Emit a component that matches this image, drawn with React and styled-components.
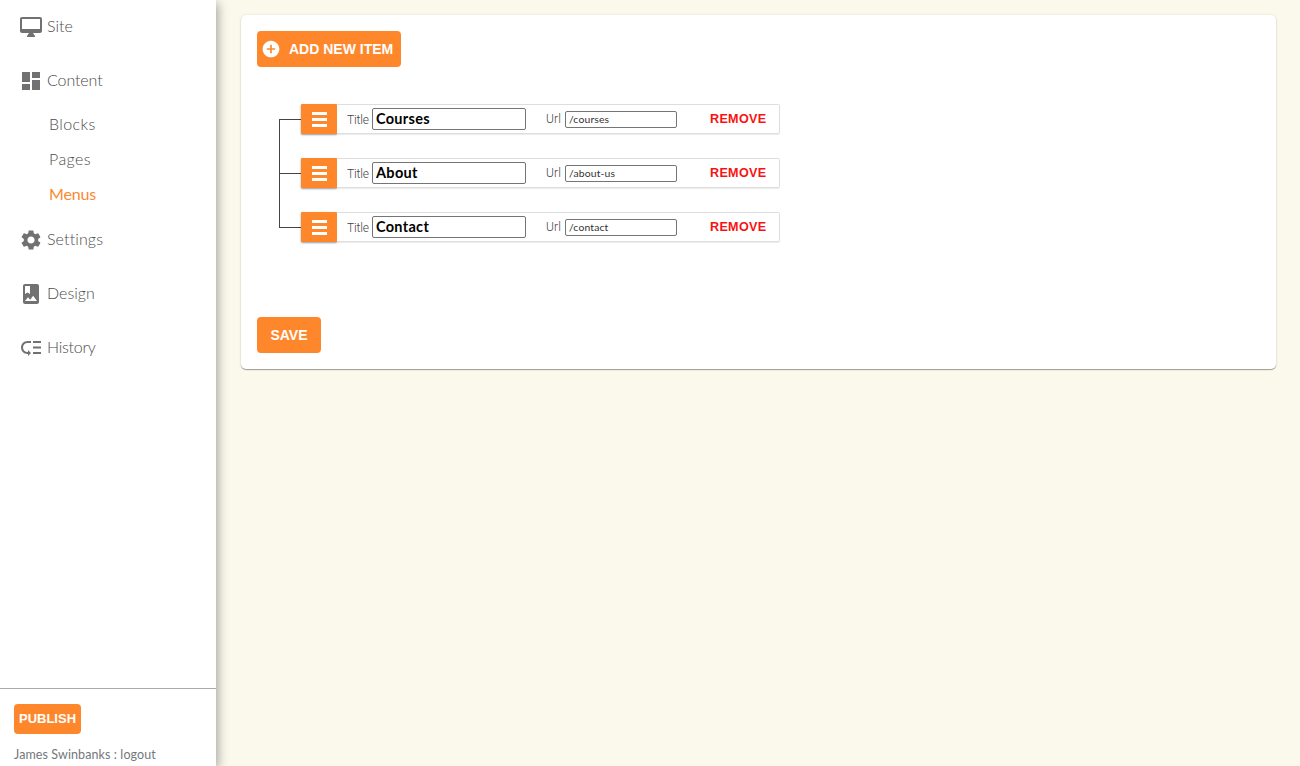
import React from 'react';
import styled, { createGlobalStyle } from 'styled-components';
import {
  MdDashboard,
  MdSettings,
  MdLowPriority,
  MdAddCircle,
} from 'react-icons/md';

const GlobalStyle = createGlobalStyle`
  * { box-sizing: border-box; }
  body {
    margin: 0;
    overflow: hidden;
    background: #fbf8ec;
    font-family: Lato, sans-serif;
    font-variant-ligatures: none;
    color: #717171;
  }
`;

const Layout = styled.div`
  display: flex;
  height: 100vh;
`;

const Sidebar = styled.aside`
  width: 216px;
  flex: none;
  display: flex;
  flex-direction: column;
  background: #fff;
  box-shadow: 2px 3px 10px rgba(0, 0, 0, 0.34);
`;

const Nav = styled.nav`
  flex: 1;
`;

const NavRow = styled.div`
  display: flex;
  align-items: center;
  gap: 4px;
  height: 54px;
  padding-left: 19px;

  svg {
    width: 24px;
    height: 24px;
    flex: none;
    color: #717171;
  }
`;

const NavText = styled.span`
  padding-bottom: 3px;
  font-size: 16px;
  line-height: 20px;
  font-weight: 300;
  letter-spacing: ${(p) => p.$tracking}px;
  color: #4c4c4c;
`;

const SubNav = styled.div`
  display: flex;
  flex-direction: column;
`;

const SubItem = styled.div`
  height: 35px;
  padding: 0 0 3px 49px;
  line-height: 32px;
  font-size: 16px;
  font-weight: ${(p) => (p.$active ? 400 : 300)};
  letter-spacing: ${(p) => p.$tracking}px;
  color: ${(p) => (p.$active ? '#fd872f' : '#4c4c4c')};
`;

const Account = styled.footer`
  height: 78px;
  flex: none;
  border-top: 1px solid #aaa;
  padding: 15px 14px 0;
`;

const Button = styled.button`
  display: flex;
  align-items: center;
  justify-content: ${(p) => (p.$start ? 'flex-start' : 'center')};
  width: ${(p) => p.$width}px;
  height: ${(p) => p.$height}px;
  padding: 0 0 ${(p) => p.$lift || 0}px ${(p) => p.$start || 0}px;
  border: 0;
  border-radius: 4px;
  background: #ff872b;
  color: #fff;
  font: bold ${(p) => p.$size}px "Liberation Sans", sans-serif;
  white-space: nowrap;

  svg {
    width: 20px;
    height: 20px;
    margin-right: 8px;
    flex: none;
  }
`;

const UserLine = styled.div`
  margin-top: 13px;
  font-size: 12.5px;
  line-height: 16px;
  letter-spacing: 0.1px;
  color: #74777c;
`;

const Main = styled.main`
  flex: 1;
  padding: 15px 24px 0 25px;
`;

const Card = styled.section`
  height: 354px;
  padding: 16px;
  border-radius: 5px;
  background: #fff;
  box-shadow: 0 1px 1px rgba(0, 0, 0, 0.35), 0 0 3px rgba(0, 0, 0, 0.1);
`;

const Tree = styled.div`
  margin: 25px 0 63px 22px;
`;

const Node = styled.div`
  display: flex;
  align-items: center;
  height: 54px;
`;

const Connector = styled.div`
  width: 22px;
  height: 54px;
`;

const ConnectorTop = styled.div`
  height: 28px;
  border-bottom: 1px solid #444;
  border-left: ${(p) => (p.$line ? '1px solid #444' : '0')};
`;

const ConnectorBottom = styled.div`
  height: 26px;
  border-left: ${(p) => (p.$line ? '1px solid #444' : '0')};
`;

const Handle = styled.div`
  display: flex;
  flex-direction: column;
  align-items: center;
  justify-content: center;
  gap: 3px;
  width: 36px;
  height: 30px;
  border-radius: 1px;
  background: #ff872b;
  box-shadow: 0 1px 2px rgba(0, 0, 0, 0.4);
`;

const Bar = styled.span`
  width: 15px;
  height: 3px;
  background: #fff;
`;

const NodeBody = styled.div`
  display: flex;
  align-items: center;
  width: 443px;
  height: 30px;
  padding-left: 10px;
  border: 1px solid #dedede;
  border-left: 0;
  border-radius: 0 2px 2px 0;
  background: #fff;
  box-shadow: 0 1px 1px rgba(0, 0, 0, 0.08);
`;

const Label = styled.label`
  flex: none;
  width: ${(p) => p.$width}px;
  padding-top: ${(p) => p.$drop || 0}px;
  font-family: Roboto, sans-serif;
  font-size: 12px;
  font-weight: 300;
  letter-spacing: ${(p) => p.$tracking}px;
  line-height: 14px;
  color: #444;
`;

const Input = styled.input`
  flex: none;
  height: 22px;
  padding: 0 3px;
  border: 1px solid #757575;
  border-radius: 2px;
  background: #fff;
  outline: 0;
`;

const TitleInput = styled(Input)`
  width: 154px;
  margin-right: 20px;
  padding-bottom: 2px;
  font: bold 14.5px Lato, sans-serif;
  letter-spacing: 0.3px;
  color: #000;
`;

const UrlInput = styled(Input)`
  width: 112px;
  height: 17px;
  font: 10.4px Lato, sans-serif;
  letter-spacing: 0.15px;
  color: #333;
`;

const Remove = styled.button`
  margin-left: 33px;
  padding: 0 0 1px;
  border: 0;
  background: none;
  font: bold 12.6px "Liberation Sans", sans-serif;
  letter-spacing: 0.3px;
  color: #fa1212;
`;

const items = [
  { title: 'Courses', url: '/courses' },
  { title: 'About', url: '/about-us' },
  { title: 'Contact', url: '/contact' },
];

function MonitorIcon() {
  return (
    <svg viewBox="0 0 24 24" fill="currentColor">
      <path d="M21 2H3c-1.1 0-2 .9-2 2v12c0 1.1.9 2 2 2h7l-2 3v1h8v-1l-2-3h7c1.1 0 2-.9 2-2V4c0-1.1-.9-2-2-2zm0 12H3V4h18v10z" />
    </svg>
  );
}

function AlbumIcon() {
  return (
    <svg viewBox="0 0 24 24" fill="currentColor">
      <path d="M18 2H6c-1.1 0-2 .9-2 2v16c0 1.1.9 2 2 2h12c1.1 0 2-.9 2-2V4c0-1.1-.9-2-2-2zM6 4h5v8l-2.5-1.5L6 12V4zm0 15l3-3.86 2.14 2.58 3-3.86L18 19H6z" />
    </svg>
  );
}

function NavItem({ icon: Icon, tracking = 0, children }) {
  return (
    <NavRow>
      <Icon />
      <NavText $tracking={tracking}>{children}</NavText>
    </NavRow>
  );
}

function MenuNode({ item, first, last }) {
  return (
    <Node>
      <Connector>
        <ConnectorTop $line={!first} />
        <ConnectorBottom $line={!last} />
      </Connector>
      <Handle>
        <Bar />
        <Bar />
        <Bar />
      </Handle>
      <NodeBody>
        <Label $width={25} $drop={2} $tracking={-0.15}>Title</Label>
        <TitleInput defaultValue={item.title} />
        <Label $width={19} $tracking={0.1}>Url</Label>
        <UrlInput defaultValue={item.url} />
        <Remove>REMOVE</Remove>
      </NodeBody>
    </Node>
  );
}

export default function App() {
  return (
    <>
      <GlobalStyle />
      <Layout>
        <Sidebar>
          <Nav>
            <NavItem icon={MonitorIcon}>Site</NavItem>
            <NavItem icon={MdDashboard} tracking={-0.1}>Content</NavItem>
            <SubNav>
              <SubItem $tracking={0.4}>Blocks</SubItem>
              <SubItem $tracking={0.4}>Pages</SubItem>
              <SubItem $tracking={-0.15} $active>Menus</SubItem>
            </SubNav>
            <NavItem icon={MdSettings} tracking={0.12}>Settings</NavItem>
            <NavItem icon={AlbumIcon}>Design</NavItem>
            <NavItem icon={MdLowPriority} tracking={-0.25}>History</NavItem>
          </Nav>
          <Account>
            <Button $width={67} $height={30} $size={13} $lift={2}>PUBLISH</Button>
            <UserLine>James Swinbanks : logout</UserLine>
          </Account>
        </Sidebar>
        <Main>
          <Card>
            <Button $width={144} $height={36} $size={14} $start={4}><MdAddCircle />ADD NEW ITEM</Button>
            <Tree>
              {items.map((item, i) => (
                <MenuNode key={item.url} item={item} first={i === 0} last={i === items.length - 1} />
              ))}
            </Tree>
            <Button $width={64} $height={36} $size={14}>SAVE</Button>
          </Card>
        </Main>
      </Layout>
    </>
  );
}
